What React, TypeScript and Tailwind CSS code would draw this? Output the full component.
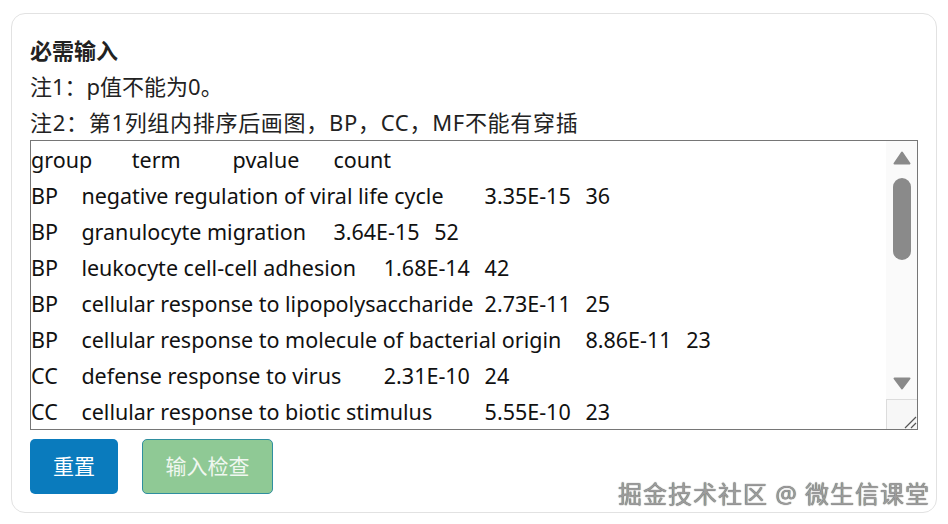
import React from "react"

// each cell: [text, width in tab stops]; last cell has no width
type Cell = [string, number]

const rows: Cell[][] = [
  [["group", 2], ["term", 2], ["pvalue", 2], ["count", 0]],
  [["BP", 1], ["negative regulation of viral life cycle", 8], ["3.35E-15", 2], ["36", 0]],
  [["BP", 1], ["granulocyte migration", 5], ["3.64E-15", 2], ["52", 0]],
  [["BP", 1], ["leukocyte cell-cell adhesion", 6], ["1.68E-14", 2], ["42", 0]],
  [["BP", 1], ["cellular response to lipopolysaccharide", 8], ["2.73E-11", 2], ["25", 0]],
  [["BP", 1], ["cellular response to molecule of bacterial origin", 10], ["8.86E-11", 2], ["23", 0]],
  [["CC", 1], ["defense response to virus", 6], ["2.31E-10", 2], ["24", 0]],
  [["CC", 1], ["cellular response to biotic stimulus", 8], ["5.55E-10", 2], ["23", 0]],
  [["CC", 1], ["response to virus", 6], ["6.12E-10", 2], ["30", 0]],
]

const TAB = 50.4
const font = "font-['Noto_Sans','Noto_Sans_CJK_SC',sans-serif]"

// fake scrollbar column, drawn like the windows one in the screenshot
function ScrollColumn() {
  return (
    <div className="flex w-[31px] flex-col items-center bg-[#fafafa]">
      <svg width="18" height="14" viewBox="0 0 18 14" className="mt-[10px]">
        <path d="M9 1.5 L16.5 12.5 L1.5 12.5 Z" fill="#8a8a8a" stroke="#8a8a8a" strokeWidth="2" strokeLinejoin="round" />
      </svg>
      <div className="mt-[13px] h-[82px] w-[18px] rounded-full bg-[#8a8a8a]" />
      <div className="flex-1" />
      <svg width="18" height="13" viewBox="0 0 18 13">
        <path d="M1.5 1.5 L16.5 1.5 L9 11.5 Z" fill="#8a8a8a" stroke="#8a8a8a" strokeWidth="2" strokeLinejoin="round" />
      </svg>
      <div className="mt-[9px] flex h-[30px] w-full items-end justify-end border-t border-l border-[#dcdcdc] bg-[#f7f7f7]">
        <svg width="16" height="16" viewBox="0 0 16 16">
          <path d="M15 4 L4 15 M15 10 L10 15" stroke="#555" strokeWidth="1.2" />
        </svg>
      </div>
    </div>
  )
}

export default function App() {
  return (
    <div className={`relative min-h-[524px] bg-white pt-[13px] pl-[11px] ${font}`}>
      <div className="w-[926px] rounded-[14px] border border-[#e2e2e2] px-[18px] pt-[18px] pb-[18px] text-[#222]">
        <div className="text-[22px] font-bold leading-[36px]">必需输入</div>
        <div className="text-[22px] leading-[36px]">注1：p值不能为0。</div>
        <div className="text-[22px] leading-[36px] tracking-[0.7px]">注2：第1列组内排序后画图，BP，CC，MF不能有穿插</div>

        {/* data box */}
        <div className="flex h-[290px] w-[888px] border border-[#767676] bg-white">
          <div className="flex-1 overflow-hidden pt-[1px] text-[21.5px] leading-[36px] text-[#111]">
            {rows.map((r, i) => (
              <div key={i} className="flex whitespace-nowrap">
                {r.map(([t, n], j) => (
                  <span key={j} className="shrink-0" style={n ? { width: n * TAB } : undefined}>
                    {t}
                  </span>
                ))}
              </div>
            ))}
          </div>
          <ScrollColumn />
        </div>

        <div className="mt-[9px] flex gap-[24px]">
          <button className="h-[55px] w-[88px] rounded-[5px] bg-[#0a7bbd] text-[21px] text-white">重置</button>
          <button className="h-[55px] w-[131px] rounded-[5px] border border-[#2f8f9f] bg-[#8fc995] text-[21px] text-[#f0f7f0]">
            输入检查
          </button>
        </div>
      </div>

      <div className="absolute right-[18px] top-[476px] text-[24px] tracking-[1px] text-[#9c9c9c] [text-shadow:0_0_1px_#333]">
        掘金技术社区 @ 微生信课堂
      </div>
    </div>
  )
}
